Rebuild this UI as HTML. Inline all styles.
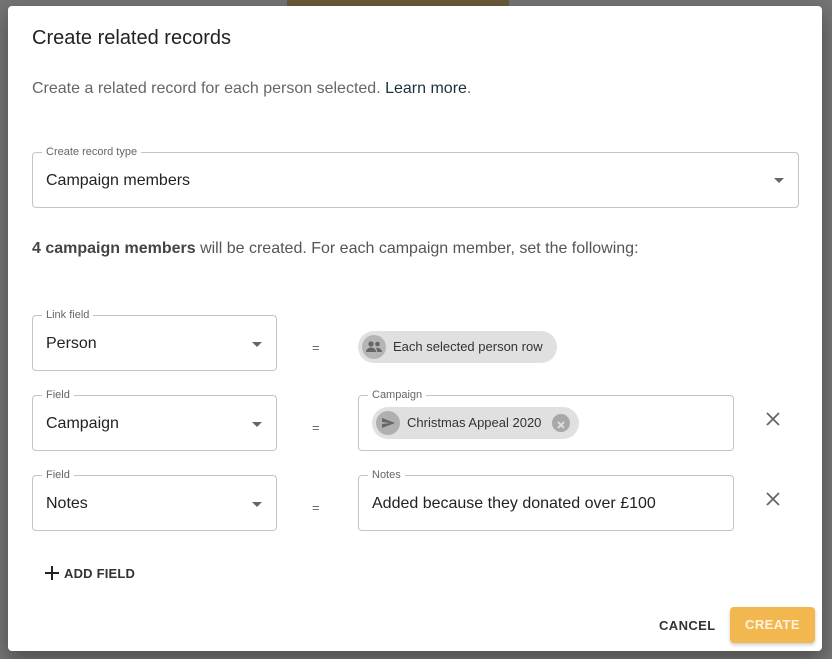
<!DOCTYPE html>
<html><head><style>
*{box-sizing:border-box;margin:0;padding:0}
body{width:832px;height:659px;background:#747474;font-family:"Liberation Sans",Arial,sans-serif;position:relative;overflow:hidden;color:#212121}
.dlg{position:absolute;left:8px;top:6px;width:814px;height:645px;background:#fff;border-radius:4px;box-shadow:0 8px 20px rgba(0,0,0,.35)}
.a{position:absolute}
.box{position:absolute;border:1px solid #c4c4c4;border-radius:4px}
.lbl{position:absolute;top:-8px;left:9px;background:#fff;padding:0 4px;font-size:11px;color:#666;line-height:14px}
.val{position:absolute;left:13px;font-size:16px;color:#222}
.tri{position:absolute;width:0;height:0;border-left:5px solid transparent;border-right:5px solid transparent;border-top:5px solid #666}
.eq{position:absolute;left:312px;font-size:13px;color:#666}
.chip{position:absolute;background:#e0e0e0;border-radius:16px;height:32px;font-size:13px;color:#333;line-height:32px}
.x{position:absolute;left:765px}
</style></head><body>
<div class="a" style="left:287px;top:0;width:222px;height:6px;background:#6a5a38"></div>
<div class="dlg"></div>
<div class="a" style="left:32px;top:27px;font-size:20px;color:#222">Create related records</div>
<div class="a" style="left:32px;top:80px;font-size:16px;color:#666">Create a related record for each person selected. <span style="color:#17343e">Learn more</span>.</div>
<div class="box" style="left:32px;top:152px;width:767px;height:56px"><div class="lbl">Create record type</div><div class="val" style="top:19px">Campaign members</div><div class="tri" style="right:14px;top:25px"></div></div>
<div class="a" style="left:32px;top:240px;font-size:16px;color:#555"><b style="color:#444">4 campaign members</b> will be created. For each campaign member, set the following:</div>

<div class="box" style="left:32px;top:315px;width:245px;height:56px"><div class="lbl">Link field</div><div class="val" style="top:19px">Person</div><div class="tri" style="right:14px;top:26px"></div></div>
<div class="eq" style="top:340px">=</div>
<div class="chip" style="left:358px;top:331px;width:199px"><div class="a" style="left:4px;top:4px;width:24px;height:24px;border-radius:12px;background:#b5b5b5"><svg width="24" height="24" viewBox="0 0 24 24"><circle cx="9" cy="9" r="2.6" fill="#666"/><circle cx="15.5" cy="9" r="2.3" fill="#666"/><path d="M4 17c0-3 3-4.5 5-4.5s5 1.5 5 4.5z" fill="#666"/><path d="M14 12.7c2.5 0 6 1 6 4.3h-5c0-2-.5-3.3-1-4.3z" fill="#666"/></svg></div><span style="position:absolute;left:35px">Each selected person row</span></div>

<div class="box" style="left:32px;top:395px;width:245px;height:56px"><div class="lbl">Field</div><div class="val" style="top:19px">Campaign</div><div class="tri" style="right:14px;top:26px"></div></div>
<div class="eq" style="top:420px">=</div>
<div class="box" style="left:358px;top:395px;width:376px;height:56px"><div class="lbl">Campaign</div>
<div class="chip" style="left:13px;top:11px;width:207px"><div class="a" style="left:4px;top:4px;width:24px;height:24px;border-radius:12px;background:#b0b0b0"><svg width="24" height="24" viewBox="0 0 24 24"><path d="M6 7l13 5-13 5v-4l8-1-8-1z" fill="#666"/></svg></div><span style="position:absolute;left:35px">Christmas Appeal 2020</span><div class="a" style="left:180px;top:7px;width:18px;height:18px;border-radius:9px;background:#a8a8a8"><svg width="18" height="18"><path d="M6 6l6 6M12 6l-6 6" stroke="#e0e0e0" stroke-width="1.8"/></svg></div></div></div>
<svg class="x" style="top:411px" width="16" height="16"><path d="M2 2l12 12M14 2L2 14" stroke="#666" stroke-width="1.8"/></svg>

<div class="box" style="left:32px;top:475px;width:245px;height:56px"><div class="lbl">Field</div><div class="val" style="top:19px">Notes</div><div class="tri" style="right:14px;top:26px"></div></div>
<div class="eq" style="top:500px">=</div>
<div class="box" style="left:358px;top:475px;width:376px;height:56px"><div class="lbl">Notes</div><div class="val" style="top:19px">Added because they donated over £100</div></div>
<svg class="x" style="top:491px" width="16" height="16"><path d="M2 2l12 12M14 2L2 14" stroke="#666" stroke-width="1.8"/></svg>

<svg class="a" style="left:44px;top:565px" width="16" height="16"><path d="M8 1v14M1 8h14" stroke="#222" stroke-width="2"/></svg>
<div class="a" style="left:64px;top:566px;font-size:13px;font-weight:bold;letter-spacing:.2px;color:#333">ADD FIELD</div>

<div class="a" style="left:659px;top:618px;font-size:13px;font-weight:bold;letter-spacing:.4px;color:#333">CANCEL</div>
<div class="a" style="left:730px;top:607px;width:85px;height:36px;background:#f2b84f;border-radius:4px;box-shadow:0 2px 3px rgba(0,0,0,.2);color:#fdf3df;font-size:13px;font-weight:bold;letter-spacing:.4px;text-align:center;line-height:36px">CREATE</div>
</body></html>
